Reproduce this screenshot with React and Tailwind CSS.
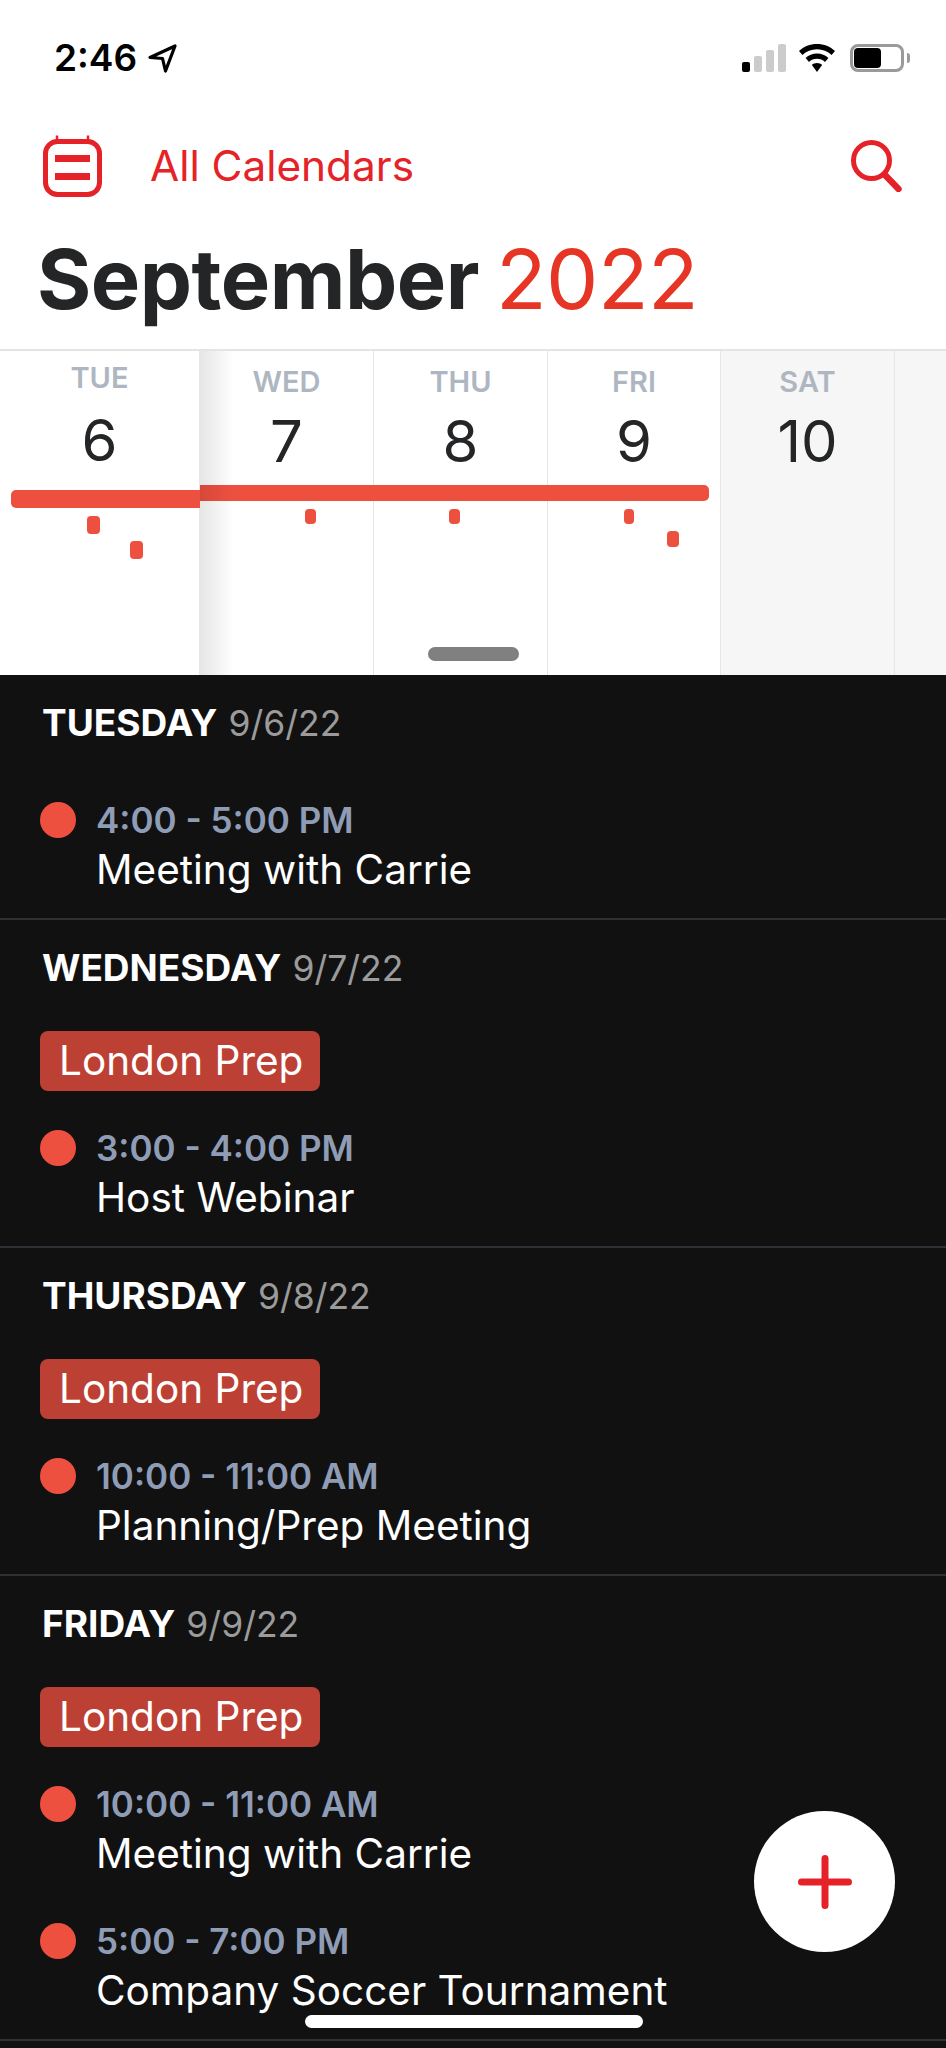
const days = [
  { label: 'TUE', num: '6', w: 'w-[200px]', bg: 'bg-white', pt: 'pt-[12px]', gap: 'mt-[15px]' },
  { label: 'WED', num: '7', w: 'w-[174px]', bg: 'bg-white', pt: 'pt-[16px]', gap: 'mt-[12px]' },
  { label: 'THU', num: '8', w: 'w-[174px]', bg: 'bg-white', pt: 'pt-[16px]', gap: 'mt-[12px]' },
  { label: 'FRI', num: '9', w: 'w-[173px]', bg: 'bg-white', pt: 'pt-[16px]', gap: 'mt-[12px]' },
  { label: 'SAT', num: '10', w: 'w-[174px]', bg: 'bg-[#f6f6f6]', pt: 'pt-[16px]', gap: 'mt-[12px]' },
];

const agenda = [
  { name: 'TUESDAY', date: '9/6/22', events: [{ time: '4:00 - 5:00 PM', title: 'Meeting with Carrie' }] },
  { name: 'WEDNESDAY', date: '9/7/22', allDay: 'London Prep', events: [{ time: '3:00 - 4:00 PM', title: 'Host Webinar' }] },
  { name: 'THURSDAY', date: '9/8/22', allDay: 'London Prep', events: [{ time: '10:00 - 11:00 AM', title: 'Planning/Prep Meeting' }] },
  {
    name: 'FRIDAY',
    date: '9/9/22',
    allDay: 'London Prep',
    events: [
      { time: '10:00 - 11:00 AM', title: 'Meeting with Carrie' },
      { time: '5:00 - 7:00 PM', title: 'Company Soccer Tournament' },
    ],
  },
];

const marks = [
  'left-[87px] top-[165px] w-[13px] h-[18px]',
  'left-[130px] top-[190px] w-[13px] h-[18px]',
  'left-[305px] top-[158px] w-[11px] h-[15px]',
  'left-[449px] top-[158px] w-[11px] h-[15px]',
  'left-[624px] top-[158px] w-[10px] h-[15px]',
  'left-[667px] top-[180px] w-[12px] h-[16px]',
];

const StatusBar = () => (
  <div className="flex items-center justify-between h-[30px] pl-[54px] pr-[36px]">
    <div className="flex items-center gap-[11px]">
      <span className="text-[37px] leading-[30px] font-semibold text-black">2:46</span>
      <svg width="29" height="29" viewBox="0 0 29 29" fill="none" stroke="#000" strokeWidth="3.2" strokeLinejoin="round">
        <path d="M2 13.500 27 2 17.500 27 14.500 14.500Z" />
      </svg>
    </div>
    <div className="flex items-center">
      <svg width="44" height="30" viewBox="0 0 44 30">
        <rect x="0" y="19" width="8" height="10" rx="2" fill="#000" />
        <rect x="12" y="13" width="8" height="16" rx="2" fill="#cccccc" />
        <rect x="24" y="7" width="8" height="22" rx="2" fill="#cccccc" />
        <rect x="36" y="1" width="8" height="28" rx="2" fill="#cccccc" />
      </svg>
      <svg className="ml-[12px]" width="38" height="30" viewBox="0 0 38 30" fill="#000">
        <path d="M19 1C12 1 5.800 3.600 1 8l3.400 4C8.300 8.300 13.400 6.200 19 6.200S29.700 8.300 33.600 12L37 8C32.200 3.600 26 1 19 1Z" />
        <path d="M19 10.500c-4.400 0-8.400 1.700-11.400 4.400l3.400 4c2.100-1.900 4.900-3.100 8-3.100s5.900 1.200 8 3.100l3.400-4c-3-2.700-7-4.400-11.400-4.400Z" />
        <path d="M19 20c-2 0-3.800.7-5.100 1.900L19 29l5.100-7.100C22.800 20.700 21 20 19 20Z" />
      </svg>
      <div className="ml-[14px] w-[54px] h-[28px] rounded-[8px] border-[3px] border-[#9a9a9a] p-[1px]">
        <div className="w-[27px] h-full rounded-[4px] bg-black" />
      </div>
      <div className="ml-[3px] w-[3px] h-[10px] rounded-r-[3px] bg-[#9a9a9a]" />
    </div>
  </div>
);

const Header = () => (
  <div className="pt-[43px] h-[349px]">
    <StatusBar />
    <div className="flex items-center justify-between pl-[43px] pr-[44px] mt-[62px] h-[62px]">
      <div className="flex items-center">
        <svg width="59" height="62" viewBox="0 0 59 62" fill="none">
          <path d="M14 0.500V6M45 0.500V6" stroke="#e52228" strokeWidth="2.500" />
          <rect x="2.500" y="6.500" width="54" height="53" rx="12" stroke="#e52228" strokeWidth="5" />
          <rect x="12" y="20" width="35" height="7" fill="#e52228" />
          <rect x="12" y="38" width="35" height="7" fill="#e52228" />
        </svg>
        <span className="ml-[48px] text-[42.300px] leading-[52px] text-[#e52228]">All Calendars</span>
      </div>
      <svg width="51" height="52" viewBox="0 0 51 52" fill="none" stroke="#e52228" strokeLinecap="round">
        <circle cx="20.500" cy="20.500" r="18" strokeWidth="5" />
        <path d="M34 35 47.500 49" strokeWidth="6.500" />
      </svg>
    </div>
    <div className="pl-[37px] mt-[37px] text-[83px] leading-[90px] tracking-[-0.5px] whitespace-nowrap">
      <span className="font-bold text-[#232527]">September</span>
      <span className="ml-[17px] text-[#e63525]">2022</span>
    </div>
  </div>
);

const WeekStrip = () => (
  <div className="relative flex h-[326px] border-t-2 border-[#e4e4e4] overflow-hidden">
    {days.map((d) => (
      <div key={d.label} className={`${d.w} ${d.bg} ${d.pt} shrink-0 border-r border-[#e6e6e6] text-center`}>
        <div className="text-[29px] leading-[30px] font-semibold text-[#aeb6c2]">{d.label}</div>
        <div className={`${d.gap} text-[58px] leading-[64px] text-[#232527]`}>{d.num}</div>
      </div>
    ))}
    <div className="flex-1 bg-[#f6f6f6]" />

    {/* events drawn over the columns */}
    <div className="absolute left-[11px] top-[139px] w-[189px] h-[18px] bg-[#ee5040] rounded-l-[5px]" />
    <div className="absolute left-[200px] top-[134px] w-[509px] h-[16px] bg-[#ee5040] rounded-r-[5px]" />
    {marks.map((m) => (
      <div key={m} className={`absolute ${m} bg-[#ee5040] rounded-[4px]`} />
    ))}
    <div className="absolute left-[200px] top-0 bottom-0 w-[34px] bg-gradient-to-r from-black/10 to-transparent" />
    <div className="absolute left-[428px] top-[296px] w-[91px] h-[14px] rounded-full bg-[#808080]" />
  </div>
);

const DaySection = ({ day }) => (
  <section className="px-[40px] pt-[28px] pb-[23px] border-b-2 border-[#2f2f35]">
    <div className="flex items-baseline pl-[2px] h-[40px] leading-[40px]">
      <span className="text-[37px] font-bold text-white">{day.name}</span>
      <span className="ml-[11px] text-[35.500px] text-[#9b9b9b]">{day.date}</span>
    </div>
    {day.allDay && (
      <div className="mt-[43px] mb-[-20px] w-[280px] h-[60px] rounded-[8px] bg-[#bc4033] pl-[19px] text-[40.500px] leading-[60px] text-white">
        {day.allDay}
      </div>
    )}
    <div className="mt-[57px] flex flex-col gap-[42px]">
      {day.events.map((ev) => (
        <div key={ev.time} className="flex">
          <div className="mt-[2px] w-[36px] h-[36px] rounded-full bg-[#ee5040] shrink-0" />
          <div className="ml-[20px]">
            <div className="text-[35px] leading-[40px] font-semibold text-[#8e9db5]">{ev.time}</div>
            <div className="mt-[5px] text-[40.500px] leading-[50px] text-white whitespace-nowrap">{ev.title}</div>
          </div>
        </div>
      ))}
    </div>
  </section>
);

export default function App() {
  return (
    <div className="relative w-[946px] h-[2048px] overflow-hidden bg-white" style={{ fontFamily: 'Inter, sans-serif' }}>
      <Header />
      <WeekStrip />
      <div className="h-[1373px] bg-[#111112]">
        {agenda.map((day) => (
          <DaySection key={day.name} day={day} />
        ))}
      </div>

      {/* floating add button */}
      <div className="absolute left-[754px] top-[1811px] w-[141px] h-[141px] rounded-full bg-white flex items-center justify-center">
        <svg width="54" height="54" viewBox="0 0 54 54" stroke="#e52228" strokeWidth="7" strokeLinecap="round">
          <path d="M27 3.500V50.500M3.500 27H50.500" />
        </svg>
      </div>
      <div className="absolute left-[305px] top-[2015px] w-[338px] h-[13px] rounded-full bg-white" />
    </div>
  );
}
